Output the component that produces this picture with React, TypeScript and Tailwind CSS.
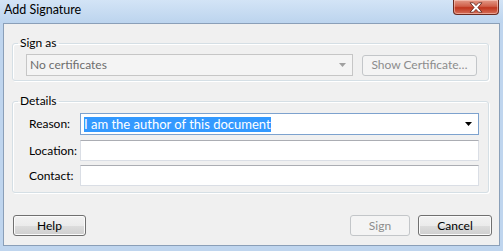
import clsx from "clsx";

const Btn = ({ label, disabled, className }: { label: string; disabled?: boolean; className?: string }) => (
  <button
    disabled={disabled}
    className={clsx(
      "h-[21px] rounded-[3px] border text-[12px] leading-none",
      disabled
        ? "border-[#c3c6c9] bg-[#f4f4f4] text-[#8c8c8c]"
        : "border-[#707070] bg-[linear-gradient(to_bottom,#f2f2f2_0%,#ebebeb_50%,#dddddd_50%,#cfcfcf_100%)] shadow-[inset_0_0_0_1px_#fbfbfb] text-black",
      className
    )}
  >
    {label}
  </button>
);

const Arrow = ({ color }: { color: string }) => (
  <svg width="7" height="4" viewBox="0 0 7 4">
    <path d="M0 0h7L3.5 4z" fill={color} />
  </svg>
);

const Field = ({ label, className, children }: { label: string; className?: string; children?: React.ReactNode }) => (
  <div className={clsx("flex items-center", className)}>
    <span className="w-[51px] shrink-0">{label}</span>
    {children ?? (
      <div className="h-[21px] w-[399px] border border-[#dadee5] border-t-[#abadb3] bg-white" />
    )}
  </div>
);

export default function App() {
  return (
    <div className="flex h-[251px] w-[503px] flex-col overflow-hidden bg-[#bfd5ee] font-['Segoe_UI','Lato',sans-serif] text-[12px] text-black">
      {/* title bar */}
      <div className="flex h-[23px] shrink-0 items-start justify-between bg-[linear-gradient(to_bottom,#d3e4f6,#bcd4ee)]">
        <span className="pl-[4px] pt-[2px] text-[12.5px] leading-[16px]">Add Signature</span>
        <div className="mr-[4px] flex h-[15px] w-[46px] items-center justify-center rounded-b-[4px] border border-t-0 border-[#6b2a1f] bg-[linear-gradient(to_bottom,#e39a88_0%,#d0604a_45%,#c0351d_55%,#d6705a_100%)] shadow-[inset_0_0_0_1px_rgba(255,220,210,0.5)]">
          <svg width="14" height="11" viewBox="0 0 14 11">
            <path
              d="M1 0.8h3.4l2.6 2.8 2.6-2.8H13L8.9 5.5 13 10.2H9.6L7 7.4 4.4 10.2H1l4.1-4.7z"
              fill="#fff"
              stroke="#5a2016"
              strokeWidth="0.8"
            />
          </svg>
        </div>
      </div>

      {/* client area */}
      <div className="mx-[3px] mb-[5px] flex flex-1 flex-col border border-[#8a9fb8] bg-[#f0f0f0]">
        <fieldset className="ml-[8px] mt-[11px] w-[477px] rounded-[3px] border border-[#d5dfe5] p-0 shadow-[inset_1px_1px_0_#fff,1px_1px_0_#fff]">
          <legend className="ml-[5px] px-[2px] leading-[16px]">Sign as</legend>
          <div className="flex items-center pb-[4px] pl-[13px] pt-[3px]">
            <div className="flex h-[22px] w-[327px] items-center justify-between border border-[#c6c6c6] bg-[#f4f4f4] pl-[3px] pr-[6px] text-[#6d6d6d]">
              <span>No certificates</span>
              <Arrow color="#a0a0a0" />
            </div>
            <Btn label="Show Certificate…" disabled className="ml-[9px] w-[115px]" />
          </div>
        </fieldset>

        <fieldset className="ml-[8px] mt-[12px] w-[477px] rounded-[3px] border border-[#d5dfe5] p-0 shadow-[inset_1px_1px_0_#fff,1px_1px_0_#fff]">
          <legend className="ml-[5px] px-[2px] leading-[16px]">Details</legend>
          <div className="flex flex-col pb-[6px] pl-[16px] pt-[4px]">
            <Field label="Reason:">
              <div className="flex h-[22px] w-[399px] items-center justify-between border border-[#7da2ce] bg-white pl-[3px] pr-[6px]">
                <span className="bg-[#3399ff] text-[13px] leading-[15px] text-white">I am the author of this document</span>
                <Arrow color="#000" />
              </div>
            </Field>
            <Field label="Location:" className="mt-[5px]" />
            <Field label="Contact:" className="mt-[4px]" />
          </div>
        </fieldset>

        <div className="mt-[22px] flex items-center pl-[9px] pr-[7px]">
          <Btn label="Help" className="w-[73px]" />
          <Btn label="Sign" disabled className="ml-auto w-[60px]" />
          <Btn label="Cancel" className="ml-[8px] w-[74px]" />
        </div>
      </div>
    </div>
  );
}
